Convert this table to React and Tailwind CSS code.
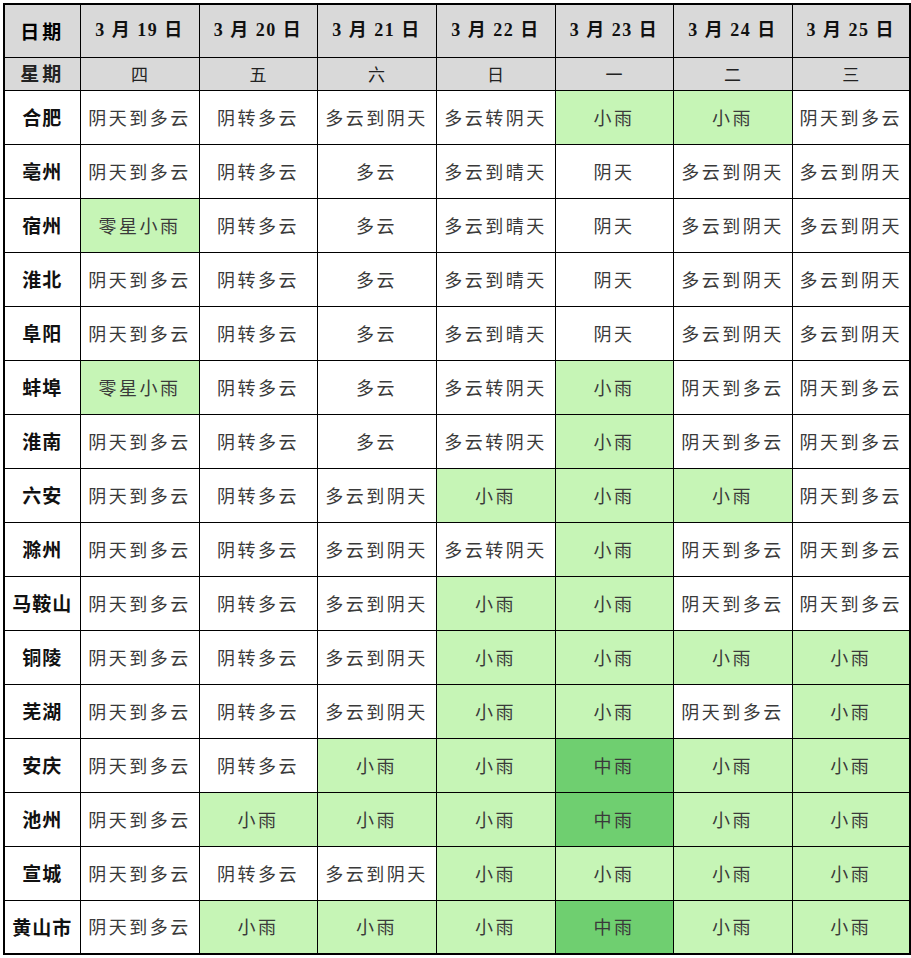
import React from "react";

const G = "g";
const D = "G";
const rows = [
  ["合肥", ["阴天到多云"], ["阴转多云"], ["多云到阴天"], ["多云转阴天"], ["小雨", G], ["小雨", G], ["阴天到多云"]],
  ["亳州", ["阴天到多云"], ["阴转多云"], ["多云"], ["多云到晴天"], ["阴天"], ["多云到阴天"], ["多云到阴天"]],
  ["宿州", ["零星小雨", G], ["阴转多云"], ["多云"], ["多云到晴天"], ["阴天"], ["多云到阴天"], ["多云到阴天"]],
  ["淮北", ["阴天到多云"], ["阴转多云"], ["多云"], ["多云到晴天"], ["阴天"], ["多云到阴天"], ["多云到阴天"]],
  ["阜阳", ["阴天到多云"], ["阴转多云"], ["多云"], ["多云到晴天"], ["阴天"], ["多云到阴天"], ["多云到阴天"]],
  ["蚌埠", ["零星小雨", G], ["阴转多云"], ["多云"], ["多云转阴天"], ["小雨", G], ["阴天到多云"], ["阴天到多云"]],
  ["淮南", ["阴天到多云"], ["阴转多云"], ["多云"], ["多云转阴天"], ["小雨", G], ["阴天到多云"], ["阴天到多云"]],
  ["六安", ["阴天到多云"], ["阴转多云"], ["多云到阴天"], ["小雨", G], ["小雨", G], ["小雨", G], ["阴天到多云"]],
  ["滁州", ["阴天到多云"], ["阴转多云"], ["多云到阴天"], ["多云转阴天"], ["小雨", G], ["阴天到多云"], ["阴天到多云"]],
  ["马鞍山", ["阴天到多云"], ["阴转多云"], ["多云到阴天"], ["小雨", G], ["小雨", G], ["阴天到多云"], ["阴天到多云"]],
  ["铜陵", ["阴天到多云"], ["阴转多云"], ["多云到阴天"], ["小雨", G], ["小雨", G], ["小雨", G], ["小雨", G]],
  ["芜湖", ["阴天到多云"], ["阴转多云"], ["多云到阴天"], ["小雨", G], ["小雨", G], ["阴天到多云"], ["小雨", G]],
  ["安庆", ["阴天到多云"], ["阴转多云"], ["小雨", G], ["小雨", G], ["中雨", D], ["小雨", G], ["小雨", G]],
  ["池州", ["阴天到多云"], ["小雨", G], ["小雨", G], ["小雨", G], ["中雨", D], ["小雨", G], ["小雨", G]],
  ["宣城", ["阴天到多云"], ["阴转多云"], ["多云到阴天"], ["小雨", G], ["小雨", G], ["小雨", G], ["小雨", G]],
  ["黄山市", ["阴天到多云"], ["小雨", G], ["小雨", G], ["小雨", G], ["中雨", D], ["小雨", G], ["小雨", G]],
];

const dates = ["3 月 19 日", "3 月 20 日", "3 月 21 日", "3 月 22 日", "3 月 23 日", "3 月 24 日", "3 月 25 日"];
const weeks = ["四", "五", "六", "日", "一", "二", "三"];
const widths = [76, 119, 118, 119, 119, 118, 119, 118];

const font = { fontFamily: '"Noto Sans CJK SC", "Liberation Serif", serif' };

export default function App() {
  return (
    <div className="w-[911px] h-[958px] bg-white pt-[3px] pl-[3px]" style={font}>
      <table className="table-fixed border-collapse border-[2px] border-black">
        <colgroup>
          {widths.map((w, i) => (
            <col key={i} style={{ width: w }} />
          ))}
        </colgroup>
        <tbody>
          <tr className="h-[53px] bg-[#d9d9d9]">
            <td className="border-[1.5px] border-black text-center font-bold text-[19px] tracking-[3px] text-black p-0">日期</td>
            {dates.map((d) => (
              <td
                key={d}
                className="border-[1.5px] border-black text-center font-bold text-[18px] tracking-[1.5px] text-[#111] p-0 whitespace-pre"
                style={{ fontFamily: '"Liberation Serif", "Noto Sans CJK SC", serif' }}
              >
                {d}
              </td>
            ))}
          </tr>
          <tr className="h-[33px] bg-[#d9d9d9]">
            <td className="border-[1.5px] border-black text-center font-bold text-[19px] tracking-[3px] text-[#222] p-0">星期</td>
            {weeks.map((w) => (
              <td key={w} className="border-[1.5px] border-black text-center text-[17px] text-[#222] p-0">
                {w}
              </td>
            ))}
          </tr>
          {rows.map((r) => (
            <tr key={r[0]} className="h-[54px]">
              <td className="border-[1.5px] border-black text-center font-bold text-[19px] tracking-[1px] text-[#111] p-0 whitespace-nowrap">
                {r[0]}
              </td>
              {r.slice(1).map(([t, c], i) => (
                <td
                  key={i}
                  className={
                    "border-[1.5px] border-black text-center text-[18px] tracking-[2.5px] text-[#3a3a3a] p-0 whitespace-nowrap " +
                    (c === "g" ? "bg-[#c6f5b6]" : c === "G" ? "bg-[#6fcf70]" : "bg-white")
                  }
                >
                  {t}
                </td>
              ))}
            </tr>
          ))}
        </tbody>
      </table>
    </div>
  );
}
